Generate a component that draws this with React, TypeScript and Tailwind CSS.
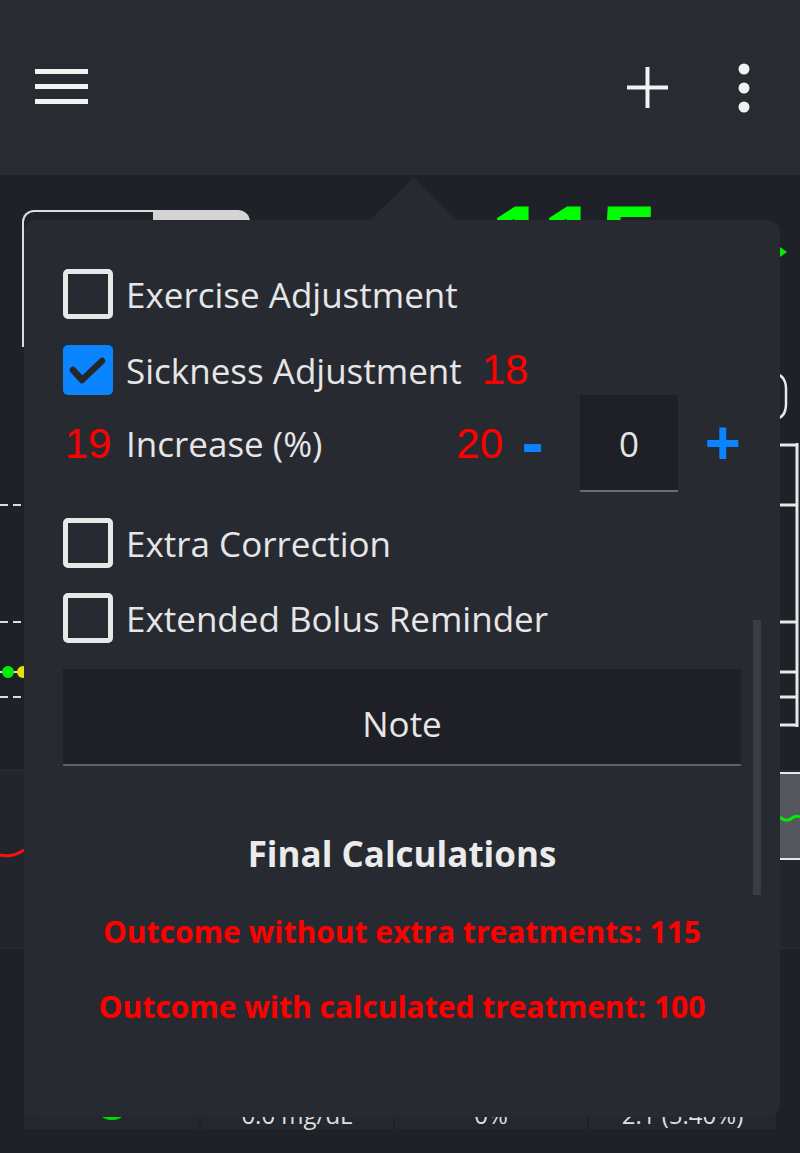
import React from 'react';

function Checkbox({ checked }: { checked?: boolean }) {
  if (checked) {
    return (
      <div className="w-[50px] h-[50px] shrink-0 rounded-[5px] bg-[#0a84ff]">
        <svg width="50" height="50" viewBox="0 0 50 50">
          <path d="M10 25 L19 35 L39 16" fill="none" stroke="#24262c" strokeWidth="6.5" strokeLinecap="round" strokeLinejoin="round" />
        </svg>
      </div>
    );
  }
  return <div className="w-[50px] h-[50px] shrink-0 rounded-[5px] border-[5px] border-[#e8e8e8]" />;
}

function CheckRow({ label, checked, children }: { label: string; checked?: boolean; children?: React.ReactNode }) {
  return (
    <div className="flex items-center h-[50px]">
      <Checkbox checked={checked} />
      <span className="ml-[13px] text-[35px] leading-none text-[#e6e6e6]">{label}</span>
      {children}
    </div>
  );
}

const redNum = "font-['Liberation_Sans',Arial,sans-serif] text-[42px] leading-none text-[#ff0000]";

function Header() {
  return (
    <div className="h-[175px] bg-[#292b33] flex items-center pl-[35px] pr-[50px]">
      <svg width="53" height="36" viewBox="0 0 53 36" className="mt-[-2px]">
        <rect x="0" y="0" width="53" height="5" fill="#f2f2f2" />
        <rect x="0" y="15" width="53" height="5" fill="#f2f2f2" />
        <rect x="0" y="30" width="53" height="5" fill="#f2f2f2" />
      </svg>
      <div className="ml-auto flex items-center">
        <svg width="41" height="41" viewBox="0 0 41 41">
          <rect x="18.5" y="0" width="4" height="41" fill="#f2f2f2" />
          <rect x="0" y="18.5" width="41" height="4" fill="#f2f2f2" />
        </svg>
        <svg width="12" height="50" viewBox="0 0 12 50" className="ml-[70px]">
          <circle cx="6" cy="6" r="5.5" fill="#f2f2f2" />
          <circle cx="6" cy="25" r="5.5" fill="#f2f2f2" />
          <circle cx="6" cy="44" r="5.5" fill="#f2f2f2" />
        </svg>
      </div>
    </div>
  );
}

function Background() {
  return (
    <>
      {/* main chart area */}
      <div className="relative h-[595px] bg-[#1f2128]">
        <div className="flex items-start">
          <div className="mt-[35px] ml-[22px] flex w-[228px] h-[137px]">
            <div className="w-[131px] h-full border-2 border-r-0 border-[#dcdcdc] rounded-tl-[12px]" />
            <div className="flex-1 h-full bg-[#d4d4d4] rounded-tr-[12px]" />
          </div>
          <div className="ml-[240px] mt-[15px] font-['Liberation_Sans',Arial,sans-serif] font-bold text-[104px] leading-none text-[#00ff00]">
            115
          </div>
        </div>
        <svg className="absolute inset-0" width="800" height="595" viewBox="0 0 800 595">
          <g stroke="#dcdcdc" strokeWidth="2" strokeDasharray="8 5">
            <line x1="0" y1="330" x2="24" y2="330" />
            <line x1="0" y1="447" x2="24" y2="447" />
            <line x1="0" y1="497" x2="24" y2="497" />
            <line x1="0" y1="522" x2="24" y2="522" />
          </g>
          <circle cx="8" cy="497" r="6" fill="#00ee00" />
          <circle cx="23" cy="497" r="6" fill="#e8e000" />
          <polygon points="780,72 787,77 780,82" fill="#00ee00" />
          <path d="M770 198 Q786 198 786 214 L786 229 Q786 245 770 245" fill="none" stroke="#e8e8e8" strokeWidth="2.5" />
          <g stroke="#e8e8e8" strokeWidth="3">
            <line x1="797" y1="268" x2="797" y2="552" />
            <line x1="780" y1="270" x2="797" y2="270" />
            <line x1="780" y1="330" x2="797" y2="330" />
            <line x1="780" y1="447" x2="797" y2="447" />
            <line x1="780" y1="497" x2="797" y2="497" />
            <line x1="780" y1="522" x2="797" y2="522" />
            <line x1="780" y1="550" x2="797" y2="550" />
          </g>
        </svg>
      </div>
      {/* secondary chart */}
      <div className="relative h-[178px] bg-[#23252c] border-t border-[#2e3037]">
        <svg className="absolute inset-0" width="800" height="178" viewBox="0 0 800 178">
          <path d="M0 84 Q12 87 24 79" fill="none" stroke="#ff1010" strokeWidth="3" />
          <rect x="780" y="2" width="20" height="86" fill="#55575e" />
          <line x1="780" y1="2" x2="800" y2="2" stroke="#e8e8e8" strokeWidth="2" />
          <line x1="780" y1="88" x2="800" y2="88" stroke="#e8e8e8" strokeWidth="2" />
          <path d="M780 46 Q786 52 792 47 Q796 44 800 46" fill="none" stroke="#00ee00" strokeWidth="3" />
        </svg>
      </div>
      {/* bottom info */}
      <div className="h-[205px] bg-[#1f2128] border-t border-[#2a2c33] pt-[111px] px-[24px]">
        <div className="flex h-[69px] bg-[#25272e] text-[24px] leading-none text-[#dedede]">
          <div className="w-[175px] flex items-end pb-[9px]">
            <div className="ml-[70px] w-[36px] h-[36px] rounded-full border-[3px] border-[#00dd00]" />
          </div>
          <div className="w-[194px] border-l-2 border-[#1f2128] flex items-end justify-center pb-[2px]">0.0 mg/dL</div>
          <div className="w-[194px] border-l-2 border-[#1f2128] flex items-end justify-center pb-[2px]">0%</div>
          <div className="flex-1 border-l-2 border-[#1f2128] flex items-end justify-center pb-[2px]">2.1 (5.40%)</div>
        </div>
      </div>
    </>
  );
}

function Popover() {
  return (
    <div className="absolute left-[24px] top-[220px] w-[756px] h-[897px] rounded-xl bg-[#282a32] px-[39px] pt-[49px]">
      <svg className="absolute left-[346px] top-[-42px]" width="87" height="42" viewBox="0 0 87 42">
        <polygon points="0,42 43.5,0 87,42" fill="#282a32" />
      </svg>

      <CheckRow label="Exercise Adjustment" />
      <div className="mt-[26px]">
        <CheckRow label="Sickness Adjustment" checked>
          <span className={`${redNum} ml-[20px]`}>18</span>
        </CheckRow>
      </div>

      <div className="flex items-center h-[97px]">
        <span className={`${redNum} w-[50px] text-center`}>19</span>
        <span className="ml-[13px] text-[35px] leading-none text-[#e6e6e6]">Increase (%)</span>
        <span className={`${redNum} ml-auto`}>20</span>
        <span className="ml-[12px] w-[35px] text-center font-bold text-[64px] leading-none text-[#0a84ff] mt-[-6px]">-</span>
        <div className="ml-[30px] w-[98px] h-[97px] pt-[2px] bg-[#1f2027] border-b-2 border-[#6a6c73] flex items-center justify-center text-[35px] leading-none text-[#e6e6e6]">
          0
        </div>
        <span className="ml-[22px] w-[41px] text-right font-bold text-[64px] leading-none text-[#0a84ff] mt-[-4px]">+</span>
      </div>

      <div className="mt-[26px]">
        <CheckRow label="Extra Correction" />
      </div>
      <div className="mt-[25px]">
        <CheckRow label="Extended Bolus Reminder" />
      </div>

      <div className="mt-[26px] h-[97px] pt-[14px] bg-[#1f2027] border-b-2 border-[#5f6168] flex items-center justify-center text-[35px] leading-none text-[#e6e6e6]">
        Note
      </div>

      <div className="mt-[63px] h-[48px] flex items-center justify-center text-[35px] font-bold leading-none text-[#ebebeb]">
        Final Calculations
      </div>
      <div className="mt-[35px] h-[40px] flex items-center justify-center text-[30px] font-bold leading-none text-[#ff0000]">
        Outcome without extra treatments: 115
      </div>
      <div className="mt-[35px] h-[40px] flex items-center justify-center text-[30px] font-bold leading-none text-[#ff0000]">
        Outcome with calculated treatment: 100
      </div>

      <div className="absolute left-[729px] top-[400px] w-[8px] h-[275px] bg-[#3b3d45]" />
    </div>
  );
}

export default function App() {
  return (
    <div className="relative w-[800px] h-[1153px] overflow-hidden bg-[#1f2128] font-['Open_Sans',sans-serif]">
      <Header />
      <Background />
      <Popover />
    </div>
  );
}
